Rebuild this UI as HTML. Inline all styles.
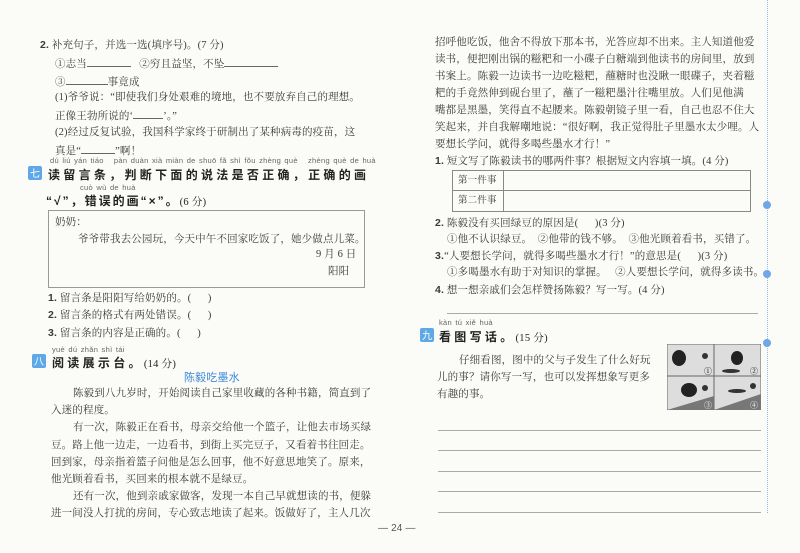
<!DOCTYPE html>
<html><head><meta charset="utf-8"><style>
body{margin:0;width:800px;height:553px;background:#fbfbf8;position:relative;overflow:hidden;font-family:"Liberation Serif","Noto Serif CJK SC",serif;color:#3a3a3a;}
.t{position:absolute;white-space:nowrap;font-size:10.5px;letter-spacing:0.15px;line-height:12px;}
.b{font-family:"Liberation Sans","Noto Sans CJK SC",sans-serif;font-weight:bold;}
.py{position:absolute;white-space:nowrap;font-family:"Liberation Sans",sans-serif;font-size:7.5px;color:#666;letter-spacing:0.3px;word-spacing:1px;}
.h{position:absolute;white-space:nowrap;font-family:"Liberation Sans","Noto Sans CJK SC",sans-serif;font-weight:bold;font-size:12px;letter-spacing:3.3px;color:#222;}
.badge{position:absolute;width:14px;height:14px;background:#5fa8e8;color:#fff;font-size:10px;text-align:center;line-height:14px;font-family:"Noto Sans CJK SC",sans-serif;border-radius:2px;}
.u{display:inline-block;border-bottom:1px solid #666;height:9px;}
.ln{position:absolute;height:1px;background:#aaa;}
</style></head><body>
<div class="t" style="left:40px;top:39px"><span class="b">2.</span> 补充句子，并选一选(填序号)。(7 分)</div>
<div class="t" style="left:55px;top:57px">①志当<span class="u" style="width:44px"></span>&nbsp;&nbsp;&nbsp;②穷且益坚，不坠<span class="u" style="width:54px"></span></div>
<div class="t" style="left:55px;top:75px">③<span class="u" style="width:42px"></span>事竟成</div>
<div class="t" style="left:55px;top:92px">(1)爷爷说：“即使我们身处艰难的境地，也不要放弃自己的理想。</div>
<div class="t" style="left:55px;top:109px">正像王勃所说的‘<span class="u" style="width:30px"></span>’。”</div>
<div class="t" style="left:55px;top:127px">(2)经过反复试验，我国科学家终于研制出了某种病毒的疫苗，这</div>
<div class="t" style="left:55px;top:144px">真是“<span class="u" style="width:34px"></span>”啊！</div>
<div class="py" style="left:50px;top:156px">dú liú yán tiáo &nbsp;&nbsp;pàn duàn xià miàn de shuō fǎ shì fǒu zhèng què &nbsp;&nbsp;zhèng què de huà</div>
<div class="badge" style="left:28px;top:166px">七</div>
<div class="h" style="left:48px;top:166px">读留言条，判断下面的说法是否正确，正确的画</div>
<div class="py" style="left:80px;top:183px">cuò wù de huà</div>
<div class="h" style="left:46px;top:192px;letter-spacing:2px">“√”，错误的画“×”。<span style="font-weight:normal;font-family:'Liberation Serif','Noto Serif CJK SC',serif;font-size:10.5px;letter-spacing:0.3px">(6 分)</span></div>
<div style="position:absolute;left:48px;top:210px;width:315px;height:76px;border:1px solid #999;"></div>
<div class="t" style="left:55px;top:217px">奶奶：</div>
<div class="t" style="left:78px;top:234px">爷爷带我去公园玩，今天中午不回家吃饭了，她少做点儿菜。</div>
<div class="t" style="left:316px;top:249px">9 月 6 日</div>
<div class="t" style="left:328px;top:266px">阳阳</div>
<div class="t" style="left:48px;top:292px"><span class="b">1.</span> 留言条是阳阳写给奶奶的。(&nbsp;&nbsp;&nbsp;&nbsp;&nbsp;&nbsp;)</div>
<div class="t" style="left:48px;top:309px"><span class="b">2.</span> 留言条的格式有两处错误。(&nbsp;&nbsp;&nbsp;&nbsp;&nbsp;&nbsp;)</div>
<div class="t" style="left:48px;top:327px"><span class="b">3.</span> 留言条的内容是正确的。(&nbsp;&nbsp;&nbsp;&nbsp;&nbsp;&nbsp;)</div>
<div class="py" style="left:52px;top:345px">yuè dú zhǎn shì tái</div>
<div class="badge" style="left:32px;top:354px">八</div>
<div class="h" style="left:52px;top:354px">阅读展示台。<span style="font-weight:normal;font-family:'Liberation Serif','Noto Serif CJK SC',serif;font-size:10.5px;letter-spacing:0.3px">(14 分)</span></div>
<div class="t" style="left:184px;top:372px;color:#3d8ad8;font-family:'Liberation Sans','Noto Sans CJK SC',sans-serif;font-size:11px">陈毅吃墨水</div>
<div class="t" style="left:73px;top:388px">陈毅到八九岁时，开始阅读自己家里收藏的各种书籍，简直到了</div>
<div class="t" style="left:51px;top:405px">入迷的程度。</div>
<div class="t" style="left:73px;top:422px">有一次，陈毅正在看书，母亲交给他一个篮子，让他去市场买绿</div>
<div class="t" style="left:51px;top:440px">豆。路上他一边走，一边看书，到街上买完豆子，又看着书往回走。</div>
<div class="t" style="left:51px;top:457px">回到家，母亲指着篮子问他是怎么回事，他不好意思地笑了。原来，</div>
<div class="t" style="left:51px;top:474px">他光顾着看书，买回来的根本就不是绿豆。</div>
<div class="t" style="left:73px;top:491px">还有一次，他到亲戚家做客，发现一本自己早就想读的书，便躲</div>
<div class="t" style="left:51px;top:508px">进一间没人打扰的房间，专心致志地读了起来。饭做好了，主人几次</div>

<div class="t" style="left:435px;top:37px">招呼他吃饭，他舍不得放下那本书，光答应却不出来。主人知道他爱</div>
<div class="t" style="left:435px;top:54px">读书，便把刚出锅的糍粑和一小碟子白糖端到他读书的房间里，放到</div>
<div class="t" style="left:435px;top:71px">书案上。陈毅一边读书一边吃糍粑，蘸糖时也没瞅一眼碟子，夹着糍</div>
<div class="t" style="left:435px;top:88px">粑的手竟然伸到砚台里了，蘸了一糍粑墨汁往嘴里放。人们见他满</div>
<div class="t" style="left:435px;top:105px">嘴都是黑墨，笑得直不起腰来。陈毅朝镜子里一看，自己也忍不住大</div>
<div class="t" style="left:435px;top:122px">笑起来，并自我解嘲地说：“很好啊，我正觉得肚子里墨水太少哩。人</div>
<div class="t" style="left:435px;top:139px">要想长学问，就得多喝些墨水才行！”</div>
<div class="t" style="left:435px;top:155px"><span class="b">1.</span> 短文写了陈毅读书的哪两件事？根据短文内容填一填。(4 分)</div>
<div style="position:absolute;left:452px;top:170px;width:297px;height:40px;border:1px solid #888;"></div>
<div style="position:absolute;left:452px;top:190px;width:298px;height:1px;background:#888;"></div>
<div style="position:absolute;left:503px;top:170px;width:1px;height:41px;background:#888;"></div>
<div class="t" style="left:458px;top:175px;font-size:9.5px">第一件事</div>
<div class="t" style="left:458px;top:195px;font-size:9.5px">第二件事</div>
<div class="t" style="left:435px;top:217px"><span class="b">2.</span> 陈毅没有买回绿豆的原因是(&nbsp;&nbsp;&nbsp;&nbsp;&nbsp;&nbsp;)(3 分)</div>
<div class="t" style="left:447px;top:234px">①他不认识绿豆。&nbsp;&nbsp;②他带的钱不够。&nbsp;&nbsp;③他光顾着看书，买错了。</div>
<div class="t" style="left:435px;top:250px"><span class="b">3.</span>“人要想长学问，就得多喝些墨水才行！”的意思是(&nbsp;&nbsp;&nbsp;&nbsp;&nbsp;&nbsp;)(3 分)</div>
<div class="t" style="left:447px;top:267px">①多喝墨水有助于对知识的掌握。&nbsp;&nbsp;&nbsp;②人要想长学问，就得多读书。</div>
<div class="t" style="left:435px;top:284px"><span class="b">4.</span> 想一想亲戚们会怎样赞扬陈毅？写一写。(4 分)</div>
<div class="ln" style="left:447px;top:313px;width:311px"></div>
<div class="py" style="left:439px;top:318px">kàn tú xiě huà</div>
<div class="badge" style="left:420px;top:328px">九</div>
<div class="h" style="left:439px;top:328px">看图写话。<span style="font-weight:normal;font-family:'Liberation Serif','Noto Serif CJK SC',serif;font-size:10.5px;letter-spacing:0.3px">(15 分)</span></div>
<div class="t" style="left:459px;top:355px">仔细看图，图中的父与子发生了什么好玩</div>
<div class="t" style="left:437px;top:372px">儿的事？请你写一写，也可以发挥想象写更多</div>
<div class="t" style="left:437px;top:389px">有趣的事。</div>
<svg style="position:absolute;left:667px;top:344px" width="94" height="66" viewBox="0 0 94 66">
<rect x="0" y="0" width="94" height="66" fill="#ddd" stroke="#666"/>
<line x1="47" y1="0" x2="47" y2="66" stroke="#666"/><line x1="0" y1="32" x2="94" y2="32" stroke="#666"/>
<polygon points="0,66 47,52 47,66" fill="#777"/><polygon points="47,66 94,50 94,66" fill="#777"/>
<ellipse cx="12" cy="14" rx="7" ry="8" fill="#222"/><circle cx="38" cy="12" r="3" fill="#333"/>
<ellipse cx="70" cy="14" rx="6" ry="7" fill="#222"/><ellipse cx="64" cy="27" rx="9" ry="2" fill="#333"/>
<ellipse cx="22" cy="46" rx="8" ry="7" fill="#222"/><circle cx="38" cy="44" r="3" fill="#333"/>
<ellipse cx="70" cy="47" rx="9" ry="2" fill="#333"/><circle cx="86" cy="42" r="3" fill="#333"/>
<text x="37" y="30" font-size="8" fill="#000">①</text><text x="83" y="30" font-size="8">②</text>
<text x="37" y="64" font-size="8" fill="#fff">③</text><text x="83" y="64" font-size="8" fill="#fff">④</text>
</svg>
<div class="ln" style="left:438px;top:430px;width:323px"></div>
<div class="ln" style="left:438px;top:450px;width:323px"></div>
<div class="ln" style="left:438px;top:471px;width:323px"></div>
<div class="ln" style="left:438px;top:491px;width:323px"></div>
<div class="ln" style="left:438px;top:512px;width:323px"></div>
<div style="position:absolute;left:767px;top:0;height:513px;border-left:1px dotted #8fb8e8"></div>
<div style="position:absolute;left:763px;top:201px;width:8px;height:8px;border-radius:50%;background:#6ea6e6"></div>
<div style="position:absolute;left:763px;top:270px;width:8px;height:8px;border-radius:50%;background:#6ea6e6"></div>
<div style="position:absolute;left:763px;top:339px;width:8px;height:8px;border-radius:50%;background:#6ea6e6"></div>
<div class="t" style="left:378px;top:523px;font-family:'Liberation Sans',sans-serif;font-size:10px;color:#555">— 24 —</div>
</body></html>
